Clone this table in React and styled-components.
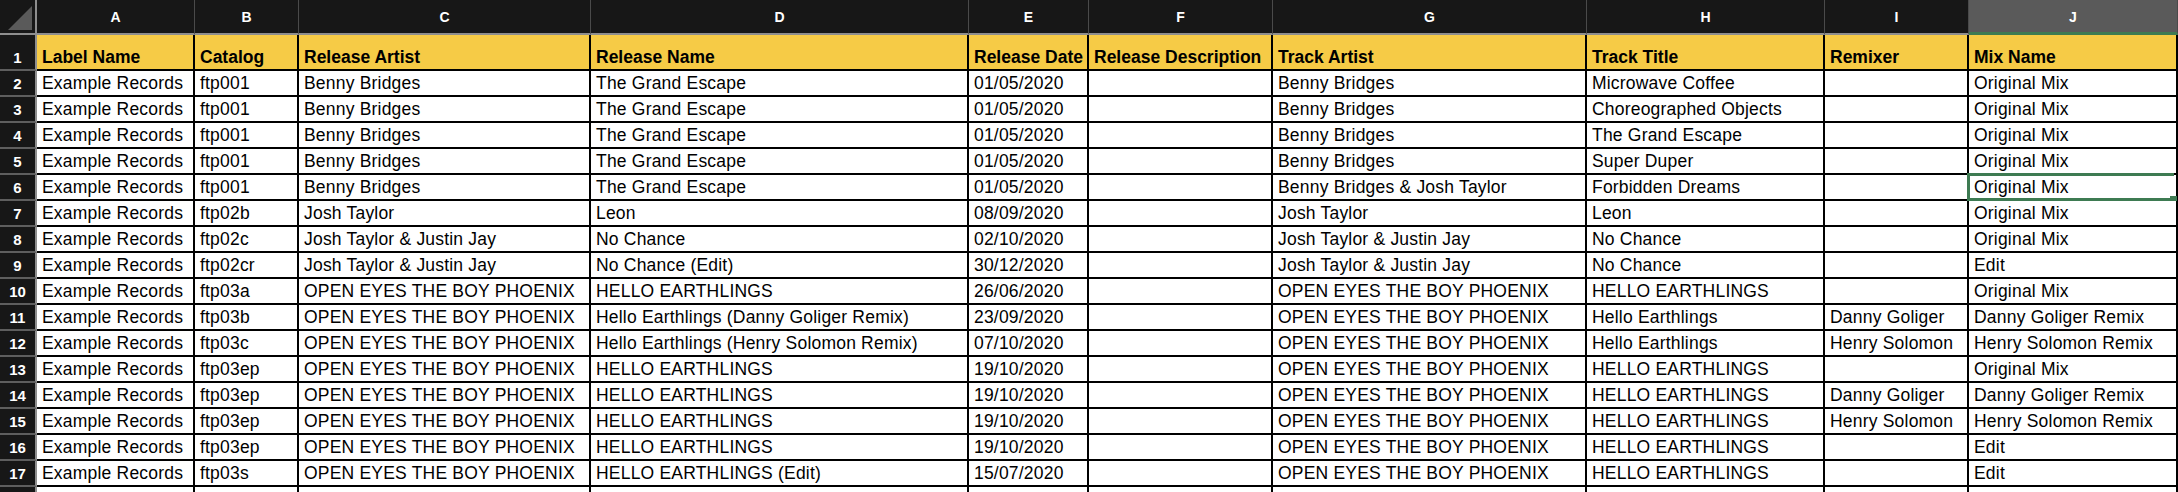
import React from 'react';
import styled, { createGlobalStyle } from 'styled-components';

const GlobalStyle = createGlobalStyle`
  html, body {
    margin: 0;
    padding: 0;
    background: #ffffff;
    overflow: hidden;
  }
  body {
    font-family: "Liberation Sans", Arial, sans-serif;
  }
`;

const COLS = ['A', 'B', 'C', 'D', 'E', 'F', 'G', 'H', 'I', 'J'];
const WIDTHS = [158, 104, 292, 378, 120, 184, 314, 238, 144, 209];

const HEADERS = [
  'Label Name', 'Catalog', 'Release Artist', 'Release Name', 'Release Date',
  'Release Description', 'Track Artist', 'Track Title', 'Remixer', 'Mix Name',
];

const OEP = 'OPEN EYES THE BOY PHOENIX';
const HE = 'HELLO EARTHLINGS';
const ER = 'Example Records';

const ROWS = [
  [ER, 'ftp001', 'Benny Bridges', 'The Grand Escape', '01/05/2020', '', 'Benny Bridges', 'Microwave Coffee', '', 'Original Mix'],
  [ER, 'ftp001', 'Benny Bridges', 'The Grand Escape', '01/05/2020', '', 'Benny Bridges', 'Choreographed Objects', '', 'Original Mix'],
  [ER, 'ftp001', 'Benny Bridges', 'The Grand Escape', '01/05/2020', '', 'Benny Bridges', 'The Grand Escape', '', 'Original Mix'],
  [ER, 'ftp001', 'Benny Bridges', 'The Grand Escape', '01/05/2020', '', 'Benny Bridges', 'Super Duper', '', 'Original Mix'],
  [ER, 'ftp001', 'Benny Bridges', 'The Grand Escape', '01/05/2020', '', 'Benny Bridges & Josh Taylor', 'Forbidden Dreams', '', 'Original Mix'],
  [ER, 'ftp02b', 'Josh Taylor', 'Leon', '08/09/2020', '', 'Josh Taylor', 'Leon', '', 'Original Mix'],
  [ER, 'ftp02c', 'Josh Taylor & Justin Jay', 'No Chance', '02/10/2020', '', 'Josh Taylor & Justin Jay', 'No Chance', '', 'Original Mix'],
  [ER, 'ftp02cr', 'Josh Taylor & Justin Jay', 'No Chance (Edit)', '30/12/2020', '', 'Josh Taylor & Justin Jay', 'No Chance', '', 'Edit'],
  [ER, 'ftp03a', OEP, HE, '26/06/2020', '', OEP, HE, '', 'Original Mix'],
  [ER, 'ftp03b', OEP, 'Hello Earthlings (Danny Goliger Remix)', '23/09/2020', '', OEP, 'Hello Earthlings', 'Danny Goliger', 'Danny Goliger Remix'],
  [ER, 'ftp03c', OEP, 'Hello Earthlings (Henry Solomon Remix)', '07/10/2020', '', OEP, 'Hello Earthlings', 'Henry Solomon', 'Henry Solomon Remix'],
  [ER, 'ftp03ep', OEP, HE, '19/10/2020', '', OEP, HE, '', 'Original Mix'],
  [ER, 'ftp03ep', OEP, HE, '19/10/2020', '', OEP, HE, 'Danny Goliger', 'Danny Goliger Remix'],
  [ER, 'ftp03ep', OEP, HE, '19/10/2020', '', OEP, HE, 'Henry Solomon', 'Henry Solomon Remix'],
  [ER, 'ftp03ep', OEP, HE, '19/10/2020', '', OEP, HE, '', 'Edit'],
  [ER, 'ftp03s', OEP, 'HELLO EARTHLINGS (Edit)', '15/07/2020', '', OEP, HE, '', 'Edit'],
];

// last row is only a sliver at the bottom edge, its number is not visible
const VISIBLE_ROWS = ROWS.length + 1;

const SELECTED = { row: 6, col: 9 };

const Sheet = styled.div`
  display: grid;
  grid-template-columns: 37px ${WIDTHS.map(w => `${w}px`).join(' ')};
  grid-template-rows: 35px 36px repeat(${VISIBLE_ROWS}, 26px);
  width: 2178px;
  height: 492px;
  overflow: hidden;
  background: #ffffff;
`;

const Corner = styled.div`
  position: relative;
  background: #171717;
  border-right: 2px solid #8e8e8e;
  border-bottom: 2px solid #8e8e8e;
  box-sizing: border-box;
  &::after {
    content: '';
    position: absolute;
    right: 3px;
    bottom: 3px;
    width: 0;
    height: 0;
    border-left: 24px solid transparent;
    border-bottom: 24px solid #5a5a5a;
  }
`;

const ColHead = styled.div`
  display: flex;
  align-items: center;
  justify-content: center;
  box-sizing: border-box;
  background: ${p => (p.$active ? '#5a5a5a' : '#171717')};
  border-right: 1px solid #4a4a4a;
  border-bottom: ${p => (p.$active ? '3px solid #3e7b52' : '2px solid #8e8e8e')};
  color: #ffffff;
  font-weight: 700;
  font-size: 14px;
  padding-top: 1px;
`;

const RowHead = styled.div`
  display: flex;
  align-items: flex-end;
  justify-content: center;
  box-sizing: border-box;
  background: #171717;
  border-right: 2px solid #8e8e8e;
  border-bottom: 2px solid #5e5e5e;
  color: #ffffff;
  font-weight: 700;
  font-size: 15px;
  padding-bottom: 3px;
`;

const Cell = styled.div`
  position: relative;
  display: flex;
  align-items: flex-end;
  box-sizing: border-box;
  min-width: 0;
  background: ${p => (p.$header ? '#f6cb46' : '#ffffff')};
  border-right: 2px solid #000000;
  border-bottom: 2px solid #000000;
  color: #000000;
  font-size: 17.5px;
  font-weight: ${p => (p.$header ? 700 : 400)};
  letter-spacing: ${p => (p.$header ? '0' : '0.2px')};
  padding: 0 0 3px 5px;
  white-space: nowrap;
  overflow: ${p => (p.$selected ? 'visible' : 'hidden')};
  line-height: 1;
`;

const Selection = styled.div`
  position: absolute;
  left: -2px;
  top: -2px;
  right: 2px;
  bottom: -2px;
  border: 3px solid #3e7b52;
  border-right: none;
  pointer-events: none;
`;

const FillHandle = styled.div`
  position: absolute;
  right: -3px;
  bottom: -5px;
  width: 7px;
  height: 7px;
  background: #3e7b52;
`;

export default function App() {
  return (
    <>
      <GlobalStyle />
      <Sheet>
        <Corner />
        {COLS.map((c, i) => (
          <ColHead key={c} $active={i === SELECTED.col}>{c}</ColHead>
        ))}

        <RowHead>1</RowHead>
        {HEADERS.map((h, i) => (
          <Cell key={`h${i}`} $header>{h}</Cell>
        ))}

        {ROWS.map((row, r) => (
          <React.Fragment key={r}>
            <RowHead>{r + 2}</RowHead>
            {row.map((v, c) => {
              const sel = r + 2 === SELECTED.row && c === SELECTED.col;
              return (
                <Cell key={c} $selected={sel}>
                  {v}
                  {sel && (
                    <Selection>
                      <FillHandle />
                    </Selection>
                  )}
                </Cell>
              );
            })}
          </React.Fragment>
        ))}

        <RowHead />
        {COLS.map(c => (
          <Cell key={`tail${c}`} />
        ))}
      </Sheet>
    </>
  );
}
